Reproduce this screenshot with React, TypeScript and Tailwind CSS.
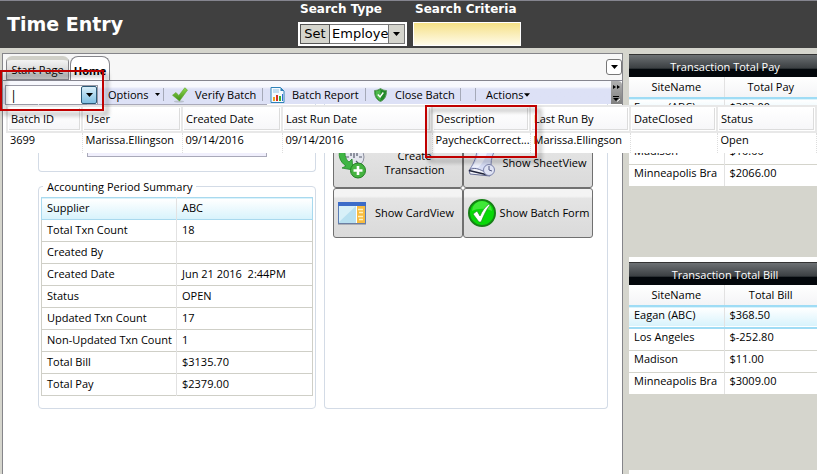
import React, { useState } from 'react';

const summary = [
    ['Supplier', 'ABC'],
    ['Total Txn Count', '18'],
    ['Created By', ''],
    ['Created Date', 'Jun 21 2016  2:44PM'],
    ['Status', 'OPEN'],
    ['Updated Txn Count', '17'],
    ['Non-Updated Txn Count', '1'],
    ['Total Bill', '$3135.70'],
    ['Total Pay', '$2379.00'],
];

const payRows = [
    ['Eagan (ABC)', '$303.00'],
    ['Los Angeles', '$-0.00'],
    ['Madison', '$10.00'],
    ['Minneapolis Bra', '$2066.00'],
];

const billRows = [
    ['Eagan (ABC)', '$368.50'],
    ['Los Angeles', '$-252.80'],
    ['Madison', '$11.00'],
    ['Minneapolis Bra', '$3009.00'],
];

const batchColumns = [
    { name: 'Batch ID', value: '3699', width: 'w-[75px]' },
    { name: 'User', value: 'Marissa.Ellingson', width: 'w-[100px]' },
    { name: 'Created Date', value: '09/14/2016', width: 'w-[100px]' },
    { name: 'Last Run Date', value: '09/14/2016', width: 'w-[150px]' },
    { name: 'Description', value: 'PaycheckCorrect...', width: 'w-[98px]' },
    { name: 'Last Run By', value: 'Marissa.Ellingson', width: 'w-[100px]' },
    { name: 'DateClosed', value: '', width: 'w-[87px]' },
    { name: 'Status', value: 'Open', width: '' },
];

const Caret: React.FC<{ className?: string }> = ({ className = 'w-[7px] h-[4px]' }) => (
    <svg viewBox="0 0 7 4" className={className} aria-hidden="true"><path d="M0 0h7L3.500 4z" fill="#000" /></svg>
);

const CheckIcon = () => (
    <svg viewBox="0 0 16 16" className="w-4 h-4 shrink-0" aria-hidden="true">
        <defs>
            <linearGradient id="tick" x1="0" y1="0" x2="0" y2="1"><stop offset="0" stopColor="#8ed850" /><stop offset="1" stopColor="#3f8f17" /></linearGradient>
        </defs>
        <ellipse cx="7" cy="14.500" rx="5" ry="1" fill="#b9c0cc" />
        <path d="M.5 8.200 4 5.500l2.800 3L12.800.8 15.500 3 7.500 14z" fill="url(#tick)" stroke="#5ea52c" strokeWidth=".6" />
    </svg>
);

const ReportIcon = () => (
    <svg viewBox="0 0 15 16" className="w-[15px] h-4 shrink-0" aria-hidden="true">
        <path d="M1 .5h9.500L14 4v11.500H1z" fill="#f4faff" stroke="#2f82b8" />
        <path d="M10.500.5V4H14z" fill="#2f82b8" />
        <path d="M3 3h6M3 5h6" stroke="#8fc1e4" />
        <path d="M3 10h2v4H3z" fill="#f0a020" />
        <path d="M6 8h2v6H6z" fill="#d93025" />
        <path d="M9 9h2v5H9z" fill="#38b030" />
        <path d="M12 7h1v7h-1z" fill="#2f6fd0" />
    </svg>
);

const ShieldIcon = () => (
    <svg viewBox="0 0 13 14" className="w-[13px] h-[14px] shrink-0" aria-hidden="true">
        <path d="M6.500.5C8.500 2 10.500 2.500 12.500 2.500 12.500 8 11 11.500 6.500 13.500 2 11.500.5 8 .5 2.500 2.500 2.500 4.500 2 6.500.5z" fill="#238a2a" stroke="#5f9a5f" />
        <path d="M6.500 1.500v11C3 11 1.500 8 1.500 3.300c2-.1 3.500-.8 5-1.800z" fill="#4cba4a" />
        <path d="m3.800 6.500 2.300 2.500 3.200-4.500" fill="none" stroke="#fff" strokeWidth="1.400" />
    </svg>
);

const CreateIcon = () => (
    <svg viewBox="0 0 28 32" className="w-7 h-8 shrink-0" aria-hidden="true">
        <circle cx="16" cy="10" r="10" fill="#e4e6ee" stroke="#8c8fa0" />
        <path d="M16 2v9M13 4v5M19 4v5M8 10h3M21 10h3M12 16l2-2M20 16l-2-2" fill="none" stroke="#555a6c" strokeWidth="1.200" />
        <path d="M3 0C-1 8 2 15 8 19l-4 2 11 2-1-11-3 3C7 12 6 6 8 0z" fill="#3fb544" stroke="#24872a" strokeWidth=".8" />
        <circle cx="20" cy="23.500" r="7.500" fill="#45b340" stroke="#208020" />
        <path d="M20 19v9M15.500 23.500h9" stroke="#fff" strokeWidth="2.600" />
    </svg>
);

const SheetIcon = () => (
    <svg viewBox="0 0 28 32" className="w-7 h-8 shrink-0" aria-hidden="true">
        <path d="M9 1h19c-3 5-5 11-5 17l-5 8-16-4C6 16 9 9 9 1z" fill="#d6dcf4" stroke="#7f86b0" />
        <path d="M11 2h9c-2 8-5 14-10 19l-6-1c4-5 7-11 7-18z" fill="#eef1fc" />
        <path d="M1 23c6-3 9-1 14 1 4 2 7 1 9-1l-2 6-20-2z" fill="#f5f6fc" stroke="#636a92" />
        <path d="M1 23.500 20 28" stroke="#20243a" strokeWidth="1.500" />
        <circle cx="21" cy="23" r="5.500" fill="#dfe3f4" stroke="#7d84ac" />
        <path d="M21 19v4l3 1" fill="none" stroke="#555a82" />
    </svg>
);

const CardIcon = () => (
    <svg viewBox="0 0 28 23" className="w-7 h-[23px] shrink-0" aria-hidden="true">
        <rect x=".5" y=".5" width="27" height="21" fill="#fff" stroke="#5c7cb4" />
        <path d="M0 0h28v4H0z" fill="#3c6cc8" />
        <path d="M1 4h17v17H1z" fill="#b8e0f0" />
        <path d="M1 4h17L1 20z" fill="#d8f0f8" />
        <path d="M19 4h8v17h-8z" fill="#f8bc40" />
        <path d="M20 7.500h5M21 10.500h4M20 14.500h5M21 17.500h4" stroke="#fff2c0" strokeWidth="1.500" />
        <path d="M0 22h28" stroke="#7a8090" />
    </svg>
);

const DoneIcon = () => (
    <svg viewBox="0 0 28 28" className="w-7 h-7 shrink-0" aria-hidden="true">
        <circle cx="14" cy="14" r="13" fill="#08d808" stroke="#178017" strokeWidth="2" />
        <path d="M4 12a10 10 0 0 1 20 0c-6-3-14-3-20 0z" fill="#40e838" />
        <path d="m5 15 4-3 3 5c2-5 5-9 9-12l1 1c-4 5-6 10-9 17h-2z" fill="#fff" stroke="#138a13" strokeWidth=".6" />
    </svg>
);

const Separator = () => <span className="w-px h-[13px] bg-[#a5a9b8]" />;

const SiteGrid: React.FC<{ title: string; amount: string; rows: string[][] }> = ({ title, amount, rows }) => (
    <section className="min-h-[208px]">
        <h2 className="h-[23px] leading-[23px] pl-1 text-center text-white border-t border-[#333] bg-linear-to-b from-[#6d7174] from-0% via-[#3b3f42] via-60% to-[#03070b] to-65%">{title}</h2>
        <table className="w-full table-fixed border-collapse bg-white">
            <thead>
                <tr className="h-[21px] bg-linear-to-b from-white to-[#f3f4f6]">
                    <th className="w-[95px] p-0 font-normal border-r border-[#e2e2e2]">SiteName</th>
                    <th className="p-0 font-normal">{amount}</th>
                </tr>
            </thead>
            <tbody>
                {rows.map(([site, value], i) => (
                    <tr key={site} className={i === 0 ? 'h-[22px] border-y-2 border-[#9fdcf5] bg-linear-to-b from-white to-[#d8f3fc]' : 'h-[22px] border-b border-[#d4d4cc] last:border-b-0'}>
                        <td className="p-0 pl-[5px] pb-1 leading-4 whitespace-nowrap border-r border-[#e2e2e2]">{site}</td>
                        <td className="p-0 pl-[5px] pb-1 leading-4">{value}</td>
                    </tr>
                ))}
            </tbody>
        </table>
    </section>
);

const ActionButton: React.FC<{ icon: React.ReactNode; label: string }> = ({ icon, label }) => (
    <button type="button" className="h-[50px] flex items-center pl-1 pr-px gap-0.5 rounded-[3px] border border-[#707070] bg-linear-to-b from-[#f4f4f4] from-15% via-[#e4e4e4] via-20% to-[#dadada]">
        {icon}
        <span className="flex-1 text-center leading-[14px]">{label}</span>
    </button>
);

export default function App() {
    const [batch, setBatch] = useState('');
    const [criteria, setCriteria] = useState('');

    return (
        <div className="relative min-h-screen flex flex-col overflow-hidden bg-[#d5d5cd] text-black text-[11px] leading-4 font-['Open_Sans','Noto_Sans',sans-serif]">
            <header className="h-12 flex border-t border-[#85858f] bg-[#404040] text-white font-['DejaVu_Sans',sans-serif]">
                <h1 className="w-[298px] pl-[7px] leading-[46px] text-[19px] font-bold">Time Entry</h1>
                <div className="w-[115px]">
                    <label htmlFor="searchType" className="block h-[21px] leading-[17px] pl-0.5 text-[12px] font-bold">Search Type</label>
                    <div className="w-[109px] h-6 p-px flex border border-white bg-white text-black text-[13px]">
                        <button type="button" className="w-[30px] border border-[#555] bg-[#d5d5cd] leading-[18px]">Set</button>
                        <div className="relative flex-1 border-y border-r border-[#777]">
                            <select id="searchType" className="w-full h-full appearance-none pl-0.5 pr-4 bg-white leading-[18px]">
                                <option>Employe</option>
                            </select>
                            <span className="absolute right-0 inset-y-0 w-4 flex items-center justify-center border-l border-[#777] bg-[#d5d5cd] pointer-events-none"><Caret /></span>
                        </div>
                    </div>
                </div>
                <div>
                    <label htmlFor="searchCriteria" className="block h-[21px] leading-[17px] pl-0.5 text-[12px] font-bold">Search Criteria</label>
                    <input id="searchCriteria" value={criteria} onChange={e => setCriteria(e.target.value)} className="block w-[108px] h-6 px-1 border border-white bg-linear-to-b from-[#f5e084] to-[#fffbe8] text-black" />
                </div>
            </header>

            <div className="flex-1 flex pt-[5px] pl-0.5">
                <main className="flex-1 flex flex-col border-t border-x border-[#85858a] bg-white">
                    <div className="h-[27px] flex items-end pl-[3px] border-b border-[#85858f] bg-[#f7f7f7]">
                        <button type="button" className="w-[63px] h-6 pt-px rounded-t-md border border-[#85858a] border-t-4 border-t-[#d0d0c8] bg-linear-to-b from-[#f4f4f4] to-[#c4c4c4] leading-4 whitespace-nowrap">Start Page</button>
                        <button type="button" className="w-10 h-6 pt-1 ml-px rounded-t-lg border border-b-0 border-[#85858a] bg-white font-bold">Home</button>
                        <button type="button" aria-label="Open windows" className="w-4 h-4 ml-auto mb-[5px] flex items-center justify-center rounded-[3px] border border-[#777] bg-white"><Caret /></button>
                    </div>

                    <div className="h-[23px] flex bg-white">
                        <div className="flex-1 flex items-center gap-2 pl-0.5 bg-linear-to-b from-[#f7f8fd] from-25% to-[#dde1f6] to-35%">
                            <div className="w-[93px] h-5 flex shrink-0 mt-1 border border-[#9a9aa6] bg-white">
                                <input aria-label="Batch" placeholder="|" value={batch} onChange={e => setBatch(e.target.value)} className="flex-1 min-w-0 pl-1 outline-none text-[13px] placeholder:text-black" />
                                <button type="button" aria-label="Show batches" className="w-4 flex items-center justify-center rounded-[2px] border border-[#2c5a78] bg-linear-to-b from-[#d9eef9] to-[#7fbfe2]"><Caret /></button>
                            </div>
                            <div className="flex items-center mt-1">
                                <button type="button" className="w-[57px] pl-0.5 flex items-center gap-1.5 whitespace-nowrap">Options <Caret className="w-[5px] h-[3px]" /></button>
                                <Separator />
                                <button type="button" className="w-[98px] pl-2 flex items-center gap-[7px] whitespace-nowrap"><CheckIcon /> Verify Batch</button>
                                <Separator />
                                <button type="button" className="w-[102px] pl-[7px] flex items-center gap-[7px] whitespace-nowrap"><ReportIcon /> Batch Report</button>
                                <Separator />
                                <button type="button" className="w-[94px] pl-2 flex items-center gap-2 whitespace-nowrap"><ShieldIcon /> Close Batch</button>
                                <Separator />
                                <span className="w-3.5" />
                                <Separator />
                                <button type="button" className="pl-2.5 flex items-center whitespace-nowrap">Actions<Caret className="w-[6px] h-[4px]" /></button>
                            </div>
                        </div>
                        <button type="button" aria-label="Toolbar options" className="w-[11px] flex flex-col items-center justify-between pt-1 pb-0.5 rounded-tr bg-linear-to-b from-[#b0b0b0] to-[#808080]">
                            <svg viewBox="0 0 8 4" className="w-2 h-1"><path d="M0 0l3 2-3 2zM4 0l3 2-3 2z" fill="#000" /></svg>
                            <svg viewBox="0 0 7 6" className="w-[7px] h-[6px]"><path d="M0 0h6v1H0zM0 2h6L3 5z" fill="#000" /><path d="M4 5.500 7 3" stroke="#fff" /></svg>
                        </button>
                    </div>

                    <div className="grid grid-cols-[278fr_284fr] gap-2 pl-[35px] pr-3.5">
                        <div>
                            <div className="h-[68px] flex justify-center rounded-b border border-t-0 border-[#d3dbe6]">
                                <div className="w-[180px] h-[53px] border border-[#a9a9b9] bg-[#f0effc]" />
                            </div>
                            <fieldset className="mt-1.5 px-0.5 pb-3 rounded border border-[#d3dbe6]">
                                <legend className="ml-0.5 px-1 leading-[17px]">Accounting Period Summary</legend>
                                <table className="w-full mt-0.5 table-fixed border-collapse border border-[#cfcfc7]">
                                    <tbody>
                                        {summary.map(([name, value], i) => (
                                            <tr key={name} className={i === 0 ? 'h-[22px] border border-[#a9d9ee] bg-linear-to-b from-white to-[#d8f3fc]' : 'h-[22px] border border-[#cfcfc7]'}>
                                                <th className="w-[135px] p-0 pl-[5px] pb-0.5 text-left font-normal whitespace-nowrap border-r border-[#e2e2e2]">{name}</th>
                                                <td className="p-0 pl-[5px] pb-0.5 whitespace-pre">{value}</td>
                                            </tr>
                                        ))}
                                    </tbody>
                                </table>
                            </fieldset>
                        </div>
                        <div className="rounded-b border border-t-0 border-[#d3dbe6] pt-[34px] pl-2 pr-3.5">
                            <div className="grid grid-cols-2">
                                <ActionButton icon={<CreateIcon />} label="Create Transaction" />
                                <ActionButton icon={<SheetIcon />} label="Show SheetView" />
                                <ActionButton icon={<CardIcon />} label="Show CardView" />
                                <ActionButton icon={<DoneIcon />} label="Show Batch Form" />
                            </div>
                        </div>
                    </div>
                </main>

                <aside className="w-[188px] ml-1.5 pt-px flex flex-col shrink-0">
                    <SiteGrid title="Transaction Total Pay" amount="Total Pay" rows={payRows} />
                    <div className="mt-[-5px] h-[5px] bg-white" />
                    <SiteGrid title="Transaction Total Bill" amount="Total Bill" rows={billRows} />
                    <div className="flex-1 bg-white" />
                </aside>
            </div>

            {/* batch picker list, dropped over the page */}
            <div className="absolute top-[105px] left-[6px] right-0 bg-white">
                <table className="w-full table-fixed border-collapse">
                    <thead>
                        <tr>
                            {batchColumns.map(col => (
                                <th key={col.name} className={`${col.width} h-[26px] p-px border-2 border-[#e8e8e8] font-normal text-left whitespace-nowrap`}>
                                    <div className="h-[22px] pl-0.5 leading-[21px] border-r border-b border-[#dcdcdc] bg-linear-to-b from-white to-[#f7f7f9]">{col.name}</div>
                                </th>
                            ))}
                        </tr>
                    </thead>
                    <tbody>
                        <tr>
                            {batchColumns.map(col => (
                                <td key={col.name} className="h-[21px] p-0 pl-[3px] pb-1.5 leading-[14px] whitespace-nowrap border-r border-dotted border-[#ddd]">{col.value}</td>
                            ))}
                        </tr>
                    </tbody>
                </table>
            </div>

            {/* call-out frames */}
            <div className="absolute top-[70px] left-0 w-[104px] h-[41px] border-2 border-[#c00000] drop-shadow-[4px_4px_2px_rgba(0,0,0,0.4)] pointer-events-none" />
            <div className="absolute top-[105px] left-[425px] w-[112px] h-[53px] border-2 border-[#c00000] drop-shadow-[4px_4px_2px_rgba(0,0,0,0.4)] pointer-events-none" />
        </div>
    );
}
